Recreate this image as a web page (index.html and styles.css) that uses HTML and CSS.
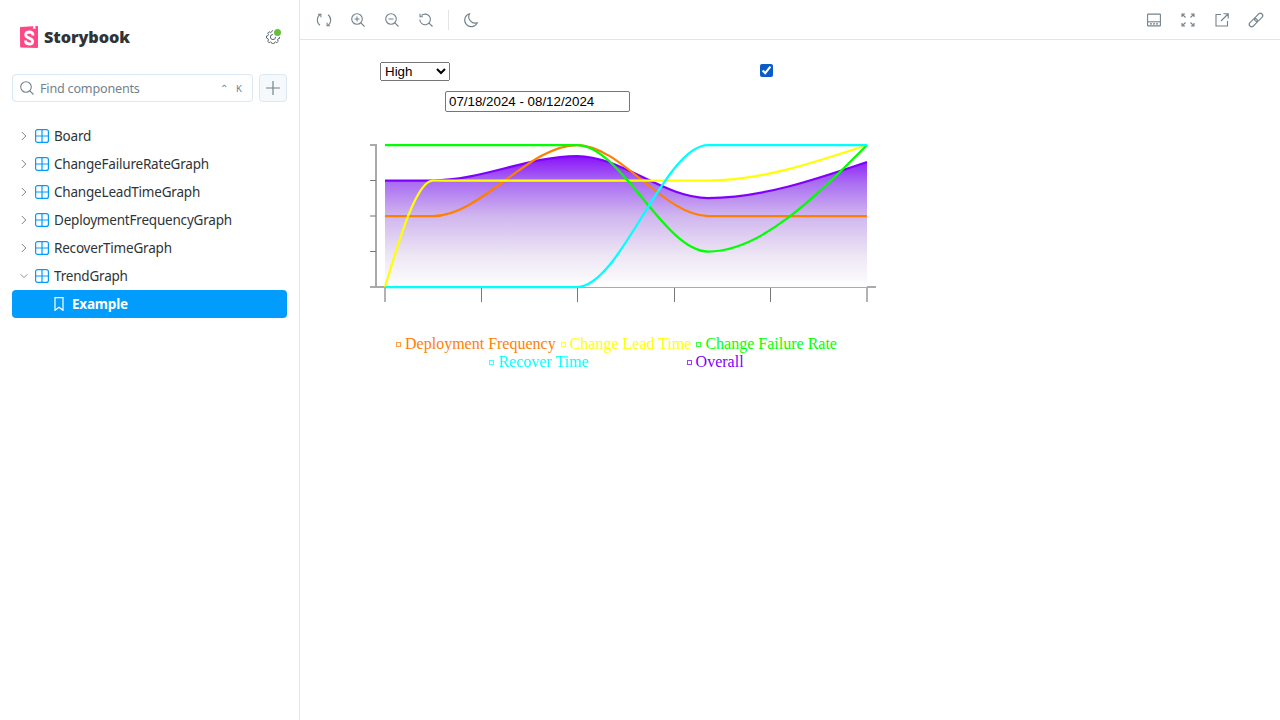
FILE: index.html
```html
<!DOCTYPE html>
<html lang="en">
<head>
<meta charset="utf-8">
<title>Storybook</title>
<link rel="stylesheet" href="styles.css">
</head>
<body>
<div class="app">
  <aside class="sidebar">
    <div class="brand">
      <div class="logo-wrap">
        <svg class="logo" width="18" height="22" viewBox="0 0 18 22"><path d="M0 1.700C0 1.300.2 1 .6 1L17 0c.5 0 1 .4 1 .9V21c0 .6-.4 1-1 1L1 21.400c-.5 0-.9-.4-.9-.9z" fill="#ff4785"/><path d="M13.200 0v3.200l1.100-.8 1.100.8V0z" fill="#fff"/><path d="M13 9.600C13 7.200 11.500 6 9.300 6 7 6 5.700 7.200 5.700 8.900c0 3.500 7 3 7 6.500 0 1.700-1.500 2.600-3.500 2.600-2.100 0-3.700-1-3.700-3.500" fill="none" stroke="#fff" stroke-width="2.800"/></svg>
        <span class="logo-text">Storybook</span>
      </div>
      <div class="gear">
        <svg width="14" height="14" viewBox="0 0 14 14" fill="none" stroke="#5c6870" stroke-width="1"><circle cx="7" cy="7" r="2.600"/><path d="M6 .8h2l.3 1.500 1.300.6 1.300-.8 1.400 1.400-.8 1.300.6 1.300 1.400.3v2l-1.400.3-.6 1.300.8 1.300-1.400 1.400-1.300-.8-1.300.6-.3 1.300H6l-.3-1.300-1.300-.6-1.300.8-1.400-1.400.8-1.300-.6-1.300L.5 8V6l1.400-.3.6-1.300-.8-1.300 1.400-1.400 1.300.8 1.300-.6z"/></svg>
        <span class="badge"></span>
      </div>
    </div>
    <div class="search-row">
      <div class="search">
        <svg width="14" height="14" viewBox="0 0 14 14" fill="none" stroke="#73828c" stroke-width="1.100"><circle cx="6" cy="6" r="5.300"/><path d="M9.800 9.800 13.500 13.500"/></svg>
        <span class="search-label">Find components</span>
        <span class="keys"><span>⌃</span><span>K</span></span>
      </div>
      <button class="add" aria-label="Add">
        <svg width="14" height="14" viewBox="0 0 14 14" stroke="#73828c" stroke-width="1.200"><path d="M7 0v14M0 7h14"/></svg>
      </button>
    </div>
    <ul class="tree">
      <li class="node"><svg class="chev" width="8" height="10" viewBox="0 0 8 10" fill="none"><path d="M1.800 1l4 4-4 4"/></svg><svg class="comp" width="14" height="14" viewBox="0 0 14 14" fill="none"><rect x=".6" y=".6" width="12.800" height="12.800" rx="2"/><path d="M7 .6v12.800M.6 7h12.800"/></svg><span>Board</span></li>
      <li class="node"><svg class="chev" width="8" height="10" viewBox="0 0 8 10" fill="none"><path d="M1.800 1l4 4-4 4"/></svg><svg class="comp" width="14" height="14" viewBox="0 0 14 14" fill="none"><rect x=".6" y=".6" width="12.800" height="12.800" rx="2"/><path d="M7 .6v12.800M.6 7h12.800"/></svg><span>ChangeFailureRateGraph</span></li>
      <li class="node"><svg class="chev" width="8" height="10" viewBox="0 0 8 10" fill="none"><path d="M1.800 1l4 4-4 4"/></svg><svg class="comp" width="14" height="14" viewBox="0 0 14 14" fill="none"><rect x=".6" y=".6" width="12.800" height="12.800" rx="2"/><path d="M7 .6v12.800M.6 7h12.800"/></svg><span>ChangeLeadTimeGraph</span></li>
      <li class="node"><svg class="chev" width="8" height="10" viewBox="0 0 8 10" fill="none"><path d="M1.800 1l4 4-4 4"/></svg><svg class="comp" width="14" height="14" viewBox="0 0 14 14" fill="none"><rect x=".6" y=".6" width="12.800" height="12.800" rx="2"/><path d="M7 .6v12.800M.6 7h12.800"/></svg><span>DeploymentFrequencyGraph</span></li>
      <li class="node"><svg class="chev" width="8" height="10" viewBox="0 0 8 10" fill="none"><path d="M1.800 1l4 4-4 4"/></svg><svg class="comp" width="14" height="14" viewBox="0 0 14 14" fill="none"><rect x=".6" y=".6" width="12.800" height="12.800" rx="2"/><path d="M7 .6v12.800M.6 7h12.800"/></svg><span>RecoverTimeGraph</span></li>
      <li class="node"><svg class="chev" width="8" height="10" viewBox="0 0 10 8" fill="none"><path d="M.5 1.800l4.500 4 4.500-4"/></svg><svg class="comp" width="14" height="14" viewBox="0 0 14 14" fill="none"><rect x=".6" y=".6" width="12.800" height="12.800" rx="2"/><path d="M7 .6v12.800M.6 7h12.800"/></svg><span>TrendGraph</span></li>
      <li class="node story"><svg width="10" height="14" viewBox="0 0 10 14" fill="none" stroke="#fff" stroke-width="1.200"><path d="M1 .7h8v12.600L5 10.300 1 13.300z"/></svg><span>Example</span></li>
    </ul>
  </aside>
  <main class="main">
    <header class="toolbar">
      <div class="tools">
        <button class="tool" aria-label="Remount"><svg width="14" height="14" viewBox="0 0 14 14"><path d="M3.700 1.300C-.8 3.800-.5 9.800 3 12.200M10.300 12.700c4.500-2.500 4.200-8.500.7-10.900"/><path d="M.9 1.300h3v3M13.100 12.700h-3v-3"/></svg></button>
        <button class="tool" aria-label="Zoom in"><svg width="14" height="14" viewBox="0 0 14 14"><circle cx="6" cy="6" r="5.300"/><path d="M9.800 9.800 13.500 13.500M3.500 6h5M6 3.500v5"/></svg></button>
        <button class="tool" aria-label="Zoom out"><svg width="14" height="14" viewBox="0 0 14 14"><circle cx="6" cy="6" r="5.300"/><path d="M9.800 9.800 13.500 13.500M3.500 6h5"/></svg></button>
        <button class="tool" aria-label="Reset zoom"><svg width="14" height="14" viewBox="0 0 14 14"><path d="M2.500 2.500A5.300 5.300 0 1 1 .8 6.500M9.800 9.800 13.500 13.500M1 .8v3h3"/></svg></button>
        <span class="sep"></span>
        <button class="tool" aria-label="Background"><svg width="14" height="14" viewBox="0 0 14 14"><path d="M5.500.7A6.600 6.600 0 1 0 13.300 9.800 6.500 6.500 0 0 1 5.500.7z"/></svg></button>
      </div>
      <div class="tools">
        <button class="tool" aria-label="Addons"><svg width="14" height="14" viewBox="0 0 14 14"><rect x=".6" y="1.100" width="12.800" height="11.800" rx=".5"/><path d="M.6 8.800h12.800"/><path d="M3 10.900h8" stroke-dasharray="2 1"/></svg></button>
        <button class="tool" aria-label="Fullscreen"><svg width="14" height="14" viewBox="0 0 14 14"><path d="M1 4V1h3M10 1h3v3M13 10v3h-3M4 13H1v-3M1.200 1.200l3.300 3.300M12.800 1.200 9.500 4.500M12.800 12.800 9.500 9.500M1.200 12.800l3.300-3.300"/></svg></button>
        <button class="tool" aria-label="Open"><svg width="14" height="14" viewBox="0 0 14 14"><path d="M6 1.500H1v11.500h11.500V8M8.500.8h4.700v4.700M13 1 6 8"/></svg></button>
        <button class="tool" aria-label="Copy link"><svg width="14" height="14" viewBox="0 0 14 14"><g transform="rotate(-45 7 7)"><rect x="-1.500" y="4.600" width="9.500" height="4.800" rx="2.400"/><rect x="6" y="4.600" width="9.500" height="4.800" rx="2.400"/></g></svg></button>
      </div>
    </header>
    <section class="canvas">
      <div class="controls">
        <select class="level"><option>High</option></select>
        <input class="check" type="checkbox" checked>
      </div>
      <div class="date-row"><input class="date" type="text" value="07/18/2024 - 08/12/2024"></div>
      <svg class="chart" width="520" height="170" viewBox="365 140 520 170" fill="none">
        <defs>
          <linearGradient id="area" x1="0" y1="0" x2="0" y2="1">
            <stop offset="0" stop-color="#8a12fb"/>
            <stop offset=".2" stop-color="#a96cf2"/>
            <stop offset=".45" stop-color="#cfb4ee"/>
            <stop offset=".75" stop-color="#ece5f4"/>
            <stop offset="1" stop-color="#fefefe"/>
          </linearGradient>
        </defs>
        <path class="domain" d="M370 145H376V287M370 287H876"/>
        <path class="tick" d="M370 180.500H376M370 216H376M370 251.500H376M481.500 288V302M577.500 288V302M674.500 288V302M770.500 288V302"/>
        <path class="tick-end" d="M385 288V302M867 288V302"/>
        <path d="M385 180.500C401 180.500 417 180.500 433 180.500C481 180.500 529 156 577 156C620.670 156 664.330 198 708 198C761 198 814 180 867 162V287H385Z" fill="url(#area)"/>
        <path class="line" stroke="#8000ff" d="M385 180.500C401 180.500 417 180.500 433 180.500C481 180.500 529 156 577 156C620.670 156 664.330 198 708 198C761 198 814 180 867 162"/>
        <path class="line" stroke="#ff7f00" d="M385 216H433C481 216 529 145 577 145C620.670 145 664.330 216 708 216H867"/>
        <path class="line" stroke="#ffff00" d="M385 287C401 233.750 417 180.500 433 180.500H708C761 180.500 814 162.750 867 145"/>
        <path class="line" stroke="#00ff00" d="M385 145H577C620.670 145 664.330 251.500 708 251.500C761 251.500 814 198.250 867 145"/>
        <path class="line" stroke="#00ffff" d="M385 287H577C620.670 287 664.330 145 708 145H867"/>
      </svg>
      <div class="legend">
        <div class="legend-row">
          <span class="item orange"><i></i>Deployment Frequency</span>
          <span class="item yellow"><i></i>Change Lead Time</span>
          <span class="item green"><i></i>Change Failure Rate</span>
        </div>
        <div class="legend-row wide">
          <span class="item cyan"><i></i>Recover Time</span>
          <span class="item purple"><i></i>Overall</span>
        </div>
      </div>
    </section>
  </main>
</div>
</body>
</html>
```
FILE: styles.css
```css
* { box-sizing: border-box; }
html, body { margin: 0; height: 100%; background: #fff; overflow: hidden; }
.app { display: flex; width: 1280px; height: 720px; font-family: "Noto Sans", "Open Sans", sans-serif; }

.sidebar { width: 300px; flex: none; border-right: 1px solid #e2e5e8; padding: 0 12px; background: #fff; }
.brand { height: 74px; display: flex; align-items: center; justify-content: space-between; padding: 0 7px 0 8px; }
.logo-wrap { display: flex; align-items: center; gap: 6px; }
.logo { display: block; }
.logo-text { font-family: "Open Sans", sans-serif; font-weight: 800; font-size: 16.300px; line-height: 20px; color: #2e3438; letter-spacing: -.1px; }
.gear { position: relative; width: 14px; height: 14px; }
.gear svg { display: block; }
.badge { position: absolute; top: -1px; right: -1px; width: 7px; height: 7px; border-radius: 50%; background: #66bf3c; box-shadow: 0 0 0 1.500px #fff; }

.search-row { display: flex; gap: 6px; height: 28px; }
.search { flex: 1; display: flex; align-items: center; gap: 6px; border: 1px solid #d9e8f2; border-radius: 4px; padding: 0 7px; color: #73828c; font-size: 12.600px; letter-spacing: -.2px; }
.search-label { flex: 1; }
.keys { display: flex; gap: 8px; font-size: 9.500px; color: #73828c; padding-right: 3px; letter-spacing: 0; }
.add { width: 28px; height: 28px; border: 1px solid #d9e8f2; border-radius: 4px; background: #f6f9fc; padding: 0; display: flex; align-items: center; justify-content: center; }

.tree { list-style: none; margin: 20px 0 0; padding: 0; }
.node { height: 28px; display: flex; align-items: center; padding-left: 8px; font-size: 13.500px; letter-spacing: -.2px; color: #2e3438; }
.chev { flex: none; stroke: #73828c; stroke-width: 1; width: 8px; margin-right: 7px; }
.comp { flex: none; stroke: #029cfd; stroke-width: 1.200; margin-right: 5px; }
.story { background: #029cfd; border-radius: 4px; color: #fff; font-weight: 700; padding-left: 42px; gap: 8px; }

.main { flex: 1; min-width: 0; }
.toolbar { height: 40px; border-bottom: 1px solid #e2e5e8; display: flex; justify-content: space-between; padding: 0 10px; }
.tools { display: flex; align-items: center; gap: 6px; }
.tool { width: 28px; height: 28px; border: 0; background: none; padding: 0; display: flex; align-items: center; justify-content: center; }
.tool svg { fill: none; stroke: #73828c; stroke-width: 1.100; overflow: visible; }
.sep { width: 1px; height: 20px; background: #e2e5e8; margin: 0 2px; }

.canvas { padding: 22px 0 0 80px; }
.controls { display: flex; align-items: flex-start; width: 400px; height: 29px; }
.level { width: 70px; height: 19px; font-family: "Liberation Sans", sans-serif; font-size: 13.333px; }
.check { width: 13px; height: 13px; margin: 2px 0 0 310px; accent-color: #0b5cc8; }
.date-row { height: 49px; padding-left: 65px; }
.date { display: block; width: 185px; height: 21px; padding: 1px 3px; font-family: "Liberation Sans", sans-serif; font-size: 13.333px; border: 1px solid #767676; border-radius: 2px; }
.chart { display: block; margin: 0 0 0 -15px; }
.domain { stroke: #aaa; stroke-width: 2; }
.tick { stroke: #777; stroke-width: 1; }
.tick-end { stroke: #999; stroke-width: 1.500; }
.line { stroke-width: 2.250; }

.legend { width: 472px; margin-top: 25px; font-family: "Liberation Serif", serif; font-size: 16px; line-height: 18px; }
.legend-row { display: flex; justify-content: center; gap: 4px; }
.legend-row.wide { gap: 97px; }
.item { display: flex; align-items: center; white-space: nowrap; }
.item i { width: 5px; height: 5px; border: 1px solid currentColor; margin: 0 4px 0 1px; opacity: .75; }
.orange { color: #ff7f00; }
.yellow { color: #ffff00; }
.green { color: #00ff00; }
.cyan { color: #00ffff; }
.purple { color: #8000ff; }
```
